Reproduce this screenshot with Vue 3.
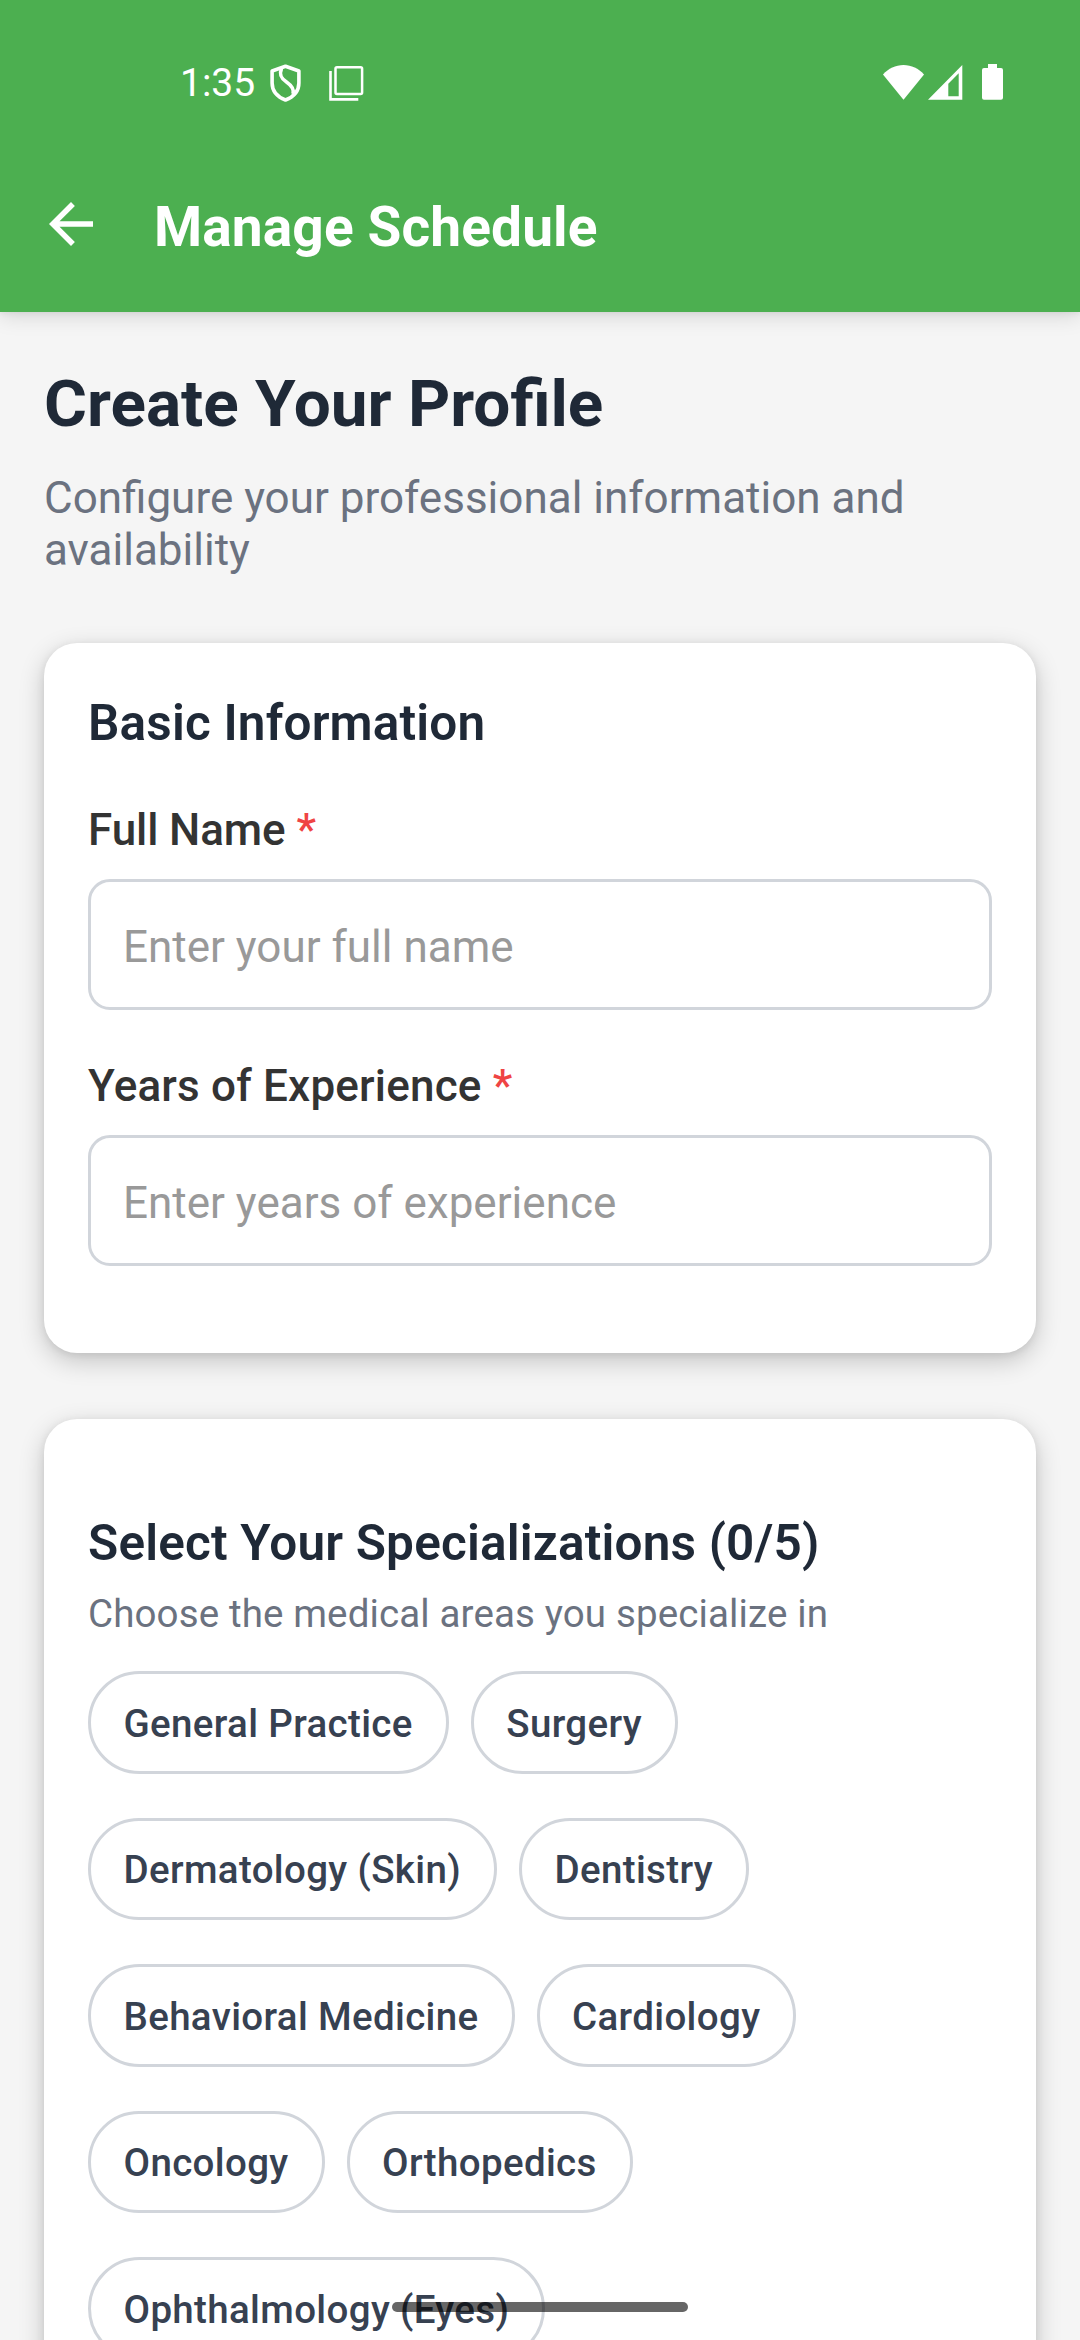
<script setup>
import { ref } from 'vue'

const fields = ref([
  { id: 'name', label: 'Full Name', placeholder: 'Enter your full name', value: '' },
  { id: 'years', label: 'Years of Experience', placeholder: 'Enter years of experience', value: '' },
])

const specializations = [
  'General Practice',
  'Surgery',
  'Dermatology (Skin)',
  'Dentistry',
  'Behavioral Medicine',
  'Cardiology',
  'Oncology',
  'Orthopedics',
  'Ophthalmology (Eyes)',
]
const selected = ref([])

function toggle(name) {
  if (selected.value.includes(name)) selected.value = selected.value.filter((n) => n !== name)
  else if (selected.value.length < 5) selected.value = [...selected.value, name]
}
</script>

<template>
  <div class="screen">
    <header class="top">
      <div class="status">
        <span class="clock">1:35</span>
        <svg class="shield" viewBox="0 0 31 38" fill="none" stroke="#fff" stroke-width="3.6" stroke-linejoin="round">
          <path d="M15.500 2.200 28.900 7v12c0 8-5.600 14-13.400 17C7.700 33 2.100 27 2.100 19V7z" />
          <path d="M11.500 4.500c-3 7 .5 10.500 5 13.500 5 3.500 8 7 6.500 12" />
        </svg>
        <svg class="copy" viewBox="0 0 35 35" fill="none" stroke="#fff">
          <rect x="6.500" y="1.300" width="26.600" height="26.600" rx="1.500" stroke-width="2.500" />
          <path d="M1.500 5v28.400H29.300" stroke-width="2.600" />
        </svg>
        <span class="spacer"></span>
        <svg class="wifi" viewBox="0 0 41 35" fill="#fff">
          <path d="M0 9.500C5.500 3.500 12.500 0 20.500 0S35.500 3.500 41 9.500L20.500 34.700z" />
        </svg>
        <svg class="signal" viewBox="0 0 35 35" fill="#fff" fill-rule="evenodd">
          <path d="M0 34.700 34.300 0v34.700zM20.300 18.800v12.400H30.700V8.300z" />
        </svg>
        <svg class="battery" viewBox="0 0 21 36" fill="#fff">
          <path d="M6 0h9v4h4a2 2 0 0 1 2 2v27.700a2 2 0 0 1-2 2H2a2 2 0 0 1-2-2V6a2 2 0 0 1 2-2h4z" />
        </svg>
      </div>
      <div class="appbar">
        <svg class="back" viewBox="0 0 24 24" fill="#fff">
          <path d="M20 11H7.830l5.590-5.590L12 4l-8 8 8 8 1.410-1.410L7.830 13H20v-2z" />
        </svg>
        <h1 class="bar-title">Manage Schedule</h1>
      </div>
    </header>

    <main class="content">
      <h2 class="title">Create Your Profile</h2>
      <p class="subtitle">Configure your professional information and availability</p>

      <section class="card basic">
        <h3 class="card-title">Basic Information</h3>
        <div v-for="f in fields" :key="f.id" class="field">
          <label class="label" :for="f.id">{{ f.label }} <span class="star">*</span></label>
          <input :id="f.id" v-model="f.value" class="input" :placeholder="f.placeholder" />
        </div>
      </section>

      <section class="card special">
        <h3 class="card-title">Select Your Specializations ({{ selected.length }}/5)</h3>
        <p class="hint">Choose the medical areas you specialize in</p>
        <div class="chips">
          <button
            v-for="s in specializations"
            :key="s"
            class="chip"
            :class="{ on: selected.includes(s) }"
            @click="toggle(s)"
          >{{ s }}</button>
        </div>
      </section>
    </main>
    <div class="nav-pill"></div>
  </div>
</template>

<style>
body {
  margin: 0;
}
</style>

<style scoped>
.screen {
  position: relative;
  width: 1080px;
  height: 2340px;
  overflow: hidden;
  background: #f5f5f5;
  font-family: Roboto, 'Liberation Sans', sans-serif;
  box-sizing: border-box;
}
h1, h2, h3, p {
  margin: 0;
}
svg {
  display: block;
  flex: none;
}
.top {
  height: 312px;
  background: #4caf50;
  box-shadow: 0 4px 20px rgba(0, 0, 0, 0.13), 0 1px 6px rgba(0, 0, 0, 0.07);
}
.status {
  display: flex;
  align-items: flex-start;
  height: 136px;
  padding: 0 77px 0 180px;
  box-sizing: border-box;
}
.clock {
  width: 90px;
  margin-top: 60px;
  font-size: 39px;
  line-height: 46px;
  color: #fff;
}
.shield {
  width: 31px;
  height: 38px;
  margin-top: 64px;
}
.copy {
  width: 35px;
  height: 35px;
  margin: 66px 0 0 28px;
}
.spacer {
  flex: 1;
}
.wifi {
  width: 41px;
  height: 35px;
  margin-top: 65px;
}
.signal {
  width: 35px;
  height: 35px;
  margin: 65px 0 0 4px;
}
.battery {
  width: 21px;
  height: 36px;
  margin: 64px 0 0 19px;
}
.appbar {
  display: flex;
  align-items: center;
  height: 176px;
  padding-left: 38px;
}
.back {
  width: 66px;
  height: 66px;
}
.bar-title {
  margin: 6px 0 0 50px;
  font-size: 55px;
  line-height: 64px;
  font-weight: 700;
  letter-spacing: 0.13px;
  color: #fff;
}
.content {
  padding: 53px 44px 0;
}
.title {
  font-size: 65.7px;
  line-height: 78px;
  font-weight: 700;
  color: #1f2937;
}
.subtitle {
  margin-top: 29px;
  font-size: 44px;
  line-height: 52px;
  color: #6b7280;
}
.card {
  background: #fff;
  border-radius: 33px;
  padding: 0 44px;
  box-shadow: 0 8px 26px rgba(0, 0, 0, 0.2), 0 2px 8px rgba(0, 0, 0, 0.08);
}
.basic {
  height: 710px;
  margin-top: 67px;
  padding-top: 50px;
  box-sizing: border-box;
}
.card-title {
  font-size: 49.5px;
  line-height: 60px;
  font-weight: 600;
  letter-spacing: 0.17px;
  color: #1f2937;
}
.field {
  height: 256px;
}
.basic .card-title {
  margin-bottom: 51px;
}
.label {
  display: block;
  height: 52px;
  margin-bottom: 23px;
  font-size: 44px;
  line-height: 52px;
  font-weight: 500;
  letter-spacing: -0.1px;
  color: #333;
}
.field:last-child .label {
  letter-spacing: 0.19px;
}
.star {
  color: #ef4444;
}
.input {
  display: block;
  width: 100%;
  height: 131px;
  box-sizing: border-box;
  border: 3px solid #d1d5db;
  border-radius: 22px;
  padding: 5px 32px 0;
  background: #fff;
  font: 400 44px/52px Roboto, 'Liberation Sans', sans-serif;
  color: #333;
  outline: none;
}
.input::placeholder {
  color: #999;
  opacity: 1;
}
.special {
  height: 1200px;
  margin-top: 66px;
  padding-top: 94px;
}
.hint {
  margin-top: 18px;
  font-size: 38.5px;
  line-height: 46px;
  letter-spacing: 0.13px;
  color: #6b7280;
}
.chips {
  display: flex;
  flex-wrap: wrap;
  gap: 44px 22px;
  width: 820px;
  margin-top: 34px;
}
.chip {
  height: 102.5px;
  box-sizing: border-box;
  border: 3px solid #d1d5db;
  border-radius: 55px;
  padding: 3px 33px 0 32.500px;
  background: #fff;
  font: 500 38.5px/46px Roboto, 'Liberation Sans', sans-serif;
  letter-spacing: 0.35px;
  color: #374151;
}
.chip.on {
  background: #4caf50;
  color: #fff;
}
.nav-pill {
  position: absolute;
  left: 392px;
  top: 2302px;
  width: 296px;
  height: 10px;
  border-radius: 5px;
  background: rgba(0, 0, 0, 0.6);
}
</style>
